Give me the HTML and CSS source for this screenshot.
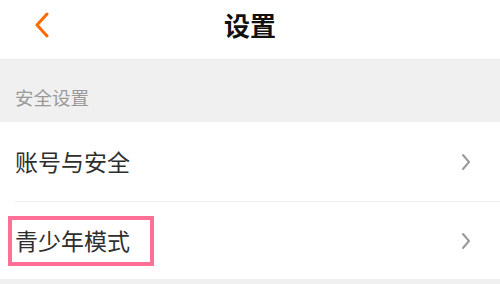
FILE: index.html
```html
<!DOCTYPE html>
<html lang="zh-CN">

<head>
    <meta charset="UTF-8">
    <meta name="viewport" content="width=device-width, initial-scale=1">
    <title>设置</title>
    <link rel="stylesheet" href="styles.css">
</head>

<body>

    <!-- Top bar -->
    <div class="nav-bar">
        <a class="back-button" href="#">
            <svg width="16" height="26" viewBox="0 0 16 26">
                <polyline points="13,2 3,13 13,24" fill="none" stroke="#ff6a00" stroke-width="3" stroke-linecap="round" stroke-linejoin="round" />
            </svg>
        </a>
        <h1>设置</h1>
    </div>

    <!-- Section -->
    <div class="section-title">安全设置</div>

    <div class="list">
        <div class="list-item">
            <span class="item-label">账号与安全</span>
            <svg class="arrow" width="10" height="18" viewBox="0 0 10 18">
                <polyline points="2,2 8,9 2,16" fill="none" stroke="#999" stroke-width="2" stroke-linecap="round" stroke-linejoin="round" />
            </svg>
        </div>
        <div class="list-item">
            <span class="item-label">青少年模式</span>
            <svg class="arrow" width="10" height="18" viewBox="0 0 10 18">
                <polyline points="2,2 8,9 2,16" fill="none" stroke="#999" stroke-width="2" stroke-linecap="round" stroke-linejoin="round" />
            </svg>
            <!-- highlight box -->
            <div class="highlight"></div>
        </div>
    </div>

    <div class="footer-gap"></div>

</body>

</html>
```

FILE: styles.css
```css
/* Settings page styles */
body {
    margin: 0;
    padding: 0;
    font-family: "Noto Sans CJK SC", "Noto Sans", sans-serif;
    color: #333;
    background-color: #f0f0f0;
    overflow: hidden;
}

.nav-bar {
    position: relative;
    height: 59px;
    display: flex;
    justify-content: center;
    align-items: center;
    background-color: white;
}

.back-button {
    position: absolute;
    left: 34px;
    top: 12px;
    display: flex;
}

h1 {
    margin: 0;
    font-size: 26px;
    font-weight: bold;
    color: #111;
    line-height: 1;
    padding-bottom: 10px;
}

.section-title {
    height: 63px;
    box-sizing: border-box;
    padding: 26px 0 0 15px;
    font-size: 18.5px;
    color: #999;
    line-height: 1.2;
    border-top: 1px solid #eaeaea;
}

.list {
    background-color: white;
}

.list-item {
    position: relative;
    height: 77px;
    display: flex;
    align-items: center;
    justify-content: space-between;
    padding: 0 29px 0 15px;
}

.list-item:first-child {
    height: 79px;
}

.list-item + .list-item {
    border-top: 1px solid #eee;
    margin-left: 15px;
    padding-left: 0;
}

.item-label {
    font-size: 23px;
    line-height: 1;
    color: #2e2e2e;
}

.highlight {
    position: absolute;
    left: -7px;
    top: 14px;
    width: 138px;
    height: 42px;
    border: 4px solid #ff7096;
}

.footer-gap {
    height: 10px;
}
```
